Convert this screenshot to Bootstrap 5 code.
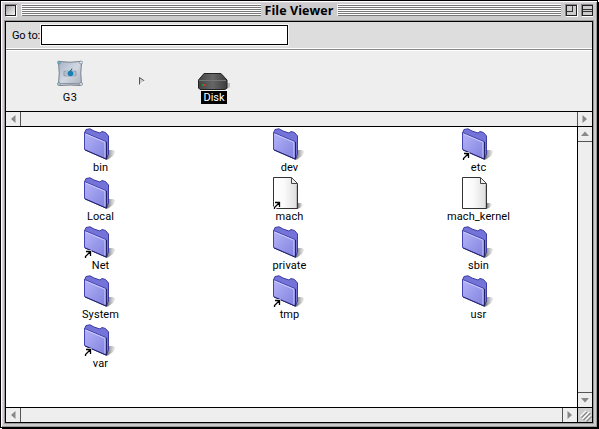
<!DOCTYPE html>
<html lang="en">
<head>
<meta charset="utf-8">
<title>File Viewer</title>
<link href="https://cdn.jsdelivr.net/npm/bootstrap@5.3.0/dist/css/bootstrap.min.css" rel="stylesheet">
<style>
body{width:599px;height:429px;overflow:hidden;background:#fff;color:#000;font:11px/12px Roboto,sans-serif}
svg{display:block;flex:none}
.win{width:598px;height:428px;border:1px solid #000;background:#ccc;box-shadow:inset 1px 1px #fff,inset -1px -1px #999,inset 2px 2px #dcd4dc,2px 2px #000;padding:0 4px 4px}
.titlebar{height:20px}
.stripes{height:12px;margin-top:3px;background:repeating-linear-gradient(#fff 0 1px,#777 1px 2px);border-left:1px solid #eee}
.stripes-left{width:240px}
.stripes-right{width:224px}
.caption{width:76px;padding-top:3px;font:700 12.5px/14px "Open Sans",sans-serif;letter-spacing:.08px;white-space:nowrap}
.pane{width:588px;height:402px;border:1px solid #000;background:#eee;box-shadow:0 0 0 1px #999}
.goto{height:29px;background:#ddd;border-bottom:1px solid #fff;box-shadow:inset 0 -1px #888,inset 0 -2px #fff;padding:3px 0 0 6px}
.goto label{width:29px;padding-top:5px;letter-spacing:-.15px;white-space:nowrap}
.goto input{width:247px;height:20px;border:1px solid #000;border-radius:0;padding:0 3px;outline:1px solid #f5f5f5;background:#fff}
.path{height:60px;padding-left:46px}
.stop{width:36px}
.stop-disk{padding-top:21px}
.host{margin-top:5px;letter-spacing:.4px}
.arrowgap{width:108px;padding:26px 0 0 51px}
.chosen{background:#000;color:#fff;height:13px;width:26px;line-height:13px}
.hbar{height:16px;background:#eee}
.bt{border-top:1px solid #000}
.bb{border-bottom:1px solid #000}
.files{display:grid;grid-template-columns:repeat(3,189px);grid-auto-rows:49px;width:571px;height:280px;background:#fff}
.file{padding-top:1px}
.file svg{margin-left:-1px}
.tag{line-height:12px;margin-top:2px;letter-spacing:.1px;white-space:nowrap}
.vbar{width:15px;border-left:1px solid #000;background:#eee}
.foot{width:572px;border-right:1px solid #000;height:14px}
.grip{width:14px;height:14px;background:#ccc}
</style>
<script src="https://cdn.jsdelivr.net/npm/bootstrap@5.3.0/dist/js/bootstrap.bundle.min.js"></script>
</head>
<body>
<svg width="0" height="0" class="position-absolute">
<defs>
<linearGradient id="blue" x1="0" y1="0" x2="1" y2="1"><stop stop-color="#b4b4fa"/><stop offset="1" stop-color="#8080dd"/></linearGradient>
<linearGradient id="sheet"><stop stop-color="#fff"/><stop offset=".45" stop-color="#fafafa"/><stop offset="1" stop-color="#ddd"/></linearGradient>
<linearGradient id="shade"><stop stop-color="#555"/><stop offset="1" stop-color="#ccc" stop-opacity=".3"/></linearGradient>
<linearGradient id="metal" x1="0" y1="0" x2="1" y2="1"><stop stop-color="#a4b2c8"/><stop offset=".5" stop-color="#d2d8e2"/><stop offset="1" stop-color="#a7afbb"/></linearGradient>
<linearGradient id="knob" x1="0" y1="0" x2="1" y2="1"><stop stop-color="#999"/><stop offset="1" stop-color="#fff"/></linearGradient>
<linearGradient id="drive"><stop stop-color="#444"/><stop offset=".5" stop-color="#666"/><stop offset="1" stop-color="#3c3c3c"/></linearGradient>
<symbol id="folder" viewBox="0 0 34 32">
<path d="M25 22H30L32.500 23.500L30 28L25 31.500H23Z" fill="url(#shade)"/>
<path d="M1.500 5L3 1.500L7 .8L11 3L17 5L19 3.500L22.500 4.500L25.500 8V26L23.500 30.500L20 28Z" fill="#7474d8" stroke="#3c3ca4"/>
<path d="M1.500 4.500L23 13.500V31L1.500 21.500Z" fill="url(#blue)" stroke="#4444b0"/>
<path d="M2.500 6L22 14.300V29.500" fill="none" stroke="#ccf"/>
<path d="M2 22L23.500 31.300V14" fill="none" stroke="#226"/>
</symbol>
<symbol id="paper" viewBox="0 0 34 32">
<path d="M25 26H29L31 27.500L29 30.500L25 32Z" fill="url(#shade)"/>
<path d="M1.500.5H19.500L25.500 6.500V31.500H1.500Z" fill="url(#sheet)" stroke="#333"/>
<path d="M19.500 1V6.500H25" fill="#eee" stroke="#444"/><path d="M24.500 8V31" stroke="#bbb"/>
</symbol>
<symbol id="alias" viewBox="0 0 34 32">
<path d="M1.500 24H8.500V31L6 29.500L4 32H1V30L4 27Z" fill="#fff"/>
<path d="M3 25.500H7.500V30M7 26L2.500 30.500V32" fill="none" stroke="#000" stroke-width="1.300"/>
</symbol>
</defs></svg>
<main class="win">
<header class="titlebar d-flex">
<svg width="16" height="20" shape-rendering="crispEdges"><path d="M0 3h12v12H0z" fill="#888"/><path d="M1 4h11v12H1z" fill="#fff"/><path d="M.500 4.500h10v10h-10z" fill="url(#knob)" stroke="#222"/></svg>
<div class="stripes stripes-left"></div>
<h1 class="caption text-center mb-0">File Viewer</h1>
<div class="stripes stripes-right"></div>
<svg width="32" height="20" viewBox="0 0 32 20" shape-rendering="crispEdges"><g><path d="M4 3h12v12H4z" fill="#888"/><path d="M5 4h12v12H5z" fill="#fff"/><path d="M5.500 4.500h10v10h-10z" fill="#ccc" stroke="#222"/><path d="M6 10.500h5.500V5" fill="none" stroke="#333"/></g><g><path d="M20 3h12v12H20z" fill="#888"/><path d="M21 4h11v12H21z" fill="#fff"/><path d="M21.500 4.500h10v10h-10z" fill="#ccc" stroke="#222"/><path d="M22 8.500h9M22 10.500h9" stroke="#333"/></g></svg>
</header>
<section class="pane">
<div class="goto d-flex"><label for="go">Go to:</label><input id="go" type="text"></div>
<div class="path d-flex text-center">
<div class="stop d-flex flex-column align-items-center pt-2">
<svg width="28" height="28" viewBox="0 0 28 28"><path d="M2.500 3.500L4 2.500Q14 4 24 2.500L25.500 3.500Q24 14 25.500 25L24 26.500Q14 25.500 4 26.500L2.500 25Q4 14 2.500 3.500Z" fill="url(#metal)" stroke="#76818f"/><path d="M5 24.500H23" stroke="#8d95a0"/><g fill="#e4ebef" stroke="#7d8794" stroke-width=".8"><circle cx="3" cy="3.500" r="1.500" fill="#4bc0d4"/><circle cx="25" cy="3.500" r="1.500"/><circle cx="3" cy="25" r="1.500" fill="#9cd0d4"/><circle cx="25" cy="25" r="1.500"/></g><rect x="7" y="11" width="14" height="7" rx="3" fill="#b4bdc9"/><path d="M10 12.500H8V16.500H10M18 12.500H20V16.500H18" stroke="#98a4b2" fill="none"/><ellipse cx="14.500" cy="14.500" rx="2.800" ry="2.800" fill="#1480b3"/><path d="M14.500 12l1.500-2.500" stroke="#075d91"/></svg>
<div class="host">G3</div></div>
<div class="arrowgap"><svg width="8" height="9"><path d="M.500 7.500V.5L5.500 4" fill="#ccc" stroke="#555"/><path d="M1 7.500L6 4" stroke="#fff"/></svg></div>
<div class="stop stop-disk d-flex flex-column align-items-center">
<svg width="34" height="19" viewBox="0 0 34 19"><path d="M29 11h4v4l-3 2h-3z" fill="#aaa" opacity=".7"/><path d="M1.500 8L7 1.500H24L30 8V16L28 17.500H3L1.500 16Z" fill="url(#drive)" stroke="#222"/><path d="M2 8.500H29" stroke="#777"/><path d="M5 12h2v2H5z" fill="#193"/><path d="M7 12h1v2H7z" fill="#d33"/></svg>
<div class="chosen">Disk</div></div>
</div>
<div class="hbar bt bb d-flex justify-content-between">
<svg width="15" height="14"><path d="M9.500 3V11L5 7Z" fill="#888"/><path d="M14.500 0V14" stroke="#555"/></svg>
<svg width="15" height="14"><path d="M5.500 3V11L10 7Z" fill="#888"/><path d="M.500 0V14" stroke="#555"/></svg>
</div>
<div class="d-flex">
<div class="files text-center" id="files"></div>
<div class="vbar d-flex flex-column justify-content-between">
<svg width="14" height="15"><path d="M3 9H11L7 4.500Z" fill="#888"/><path d="M0 14.500H14" stroke="#555"/></svg>
<svg width="14" height="15"><path d="M3 6H11L7 10.500Z" fill="#888"/><path d="M0 .5H14" stroke="#555"/></svg>
</div></div>
<div class="d-flex bt">
<div class="foot d-flex justify-content-between">
<svg width="15" height="14"><path d="M9.500 3V11L5 7Z" fill="#888"/><path d="M14.500 0V14" stroke="#555"/></svg>
<svg width="15" height="14"><path d="M5.500 3V11L10 7Z" fill="#888"/><path d="M.500 0V14" stroke="#555"/></svg>
</div>
<div class="grip"><svg width="14" height="14"><path d="M2.500 8.500L8 3M4.500 11L11.500 4M7.500 12.500L12.500 7.500" stroke="#fff" stroke-width="1.400"/><path d="M3.500 9.500L9 4M5.500 12L12.500 5M8.500 13.500L13.500 8.500" stroke="#888" stroke-width="1.200"/></svg></div>
</div>
</section>
</main>
<script>
const entries=[["bin"],["dev"],["etc",1],["Local"],["mach",1,1],["mach_kernel",0,1],["Net",1],["private"],["sbin"],["System"],["tmp",1],["usr"],["var",1]];
document.getElementById("files").innerHTML=entries.map(([name,alias,doc])=>
`<div class="file d-flex flex-column align-items-center"><svg width="34" height="32"><use href="#${doc?"paper":"folder"}"/>${alias?'<use href="#alias"/>':""}</svg><div class="tag">${name}</div></div>`).join("");
</script>
</body>
</html>
